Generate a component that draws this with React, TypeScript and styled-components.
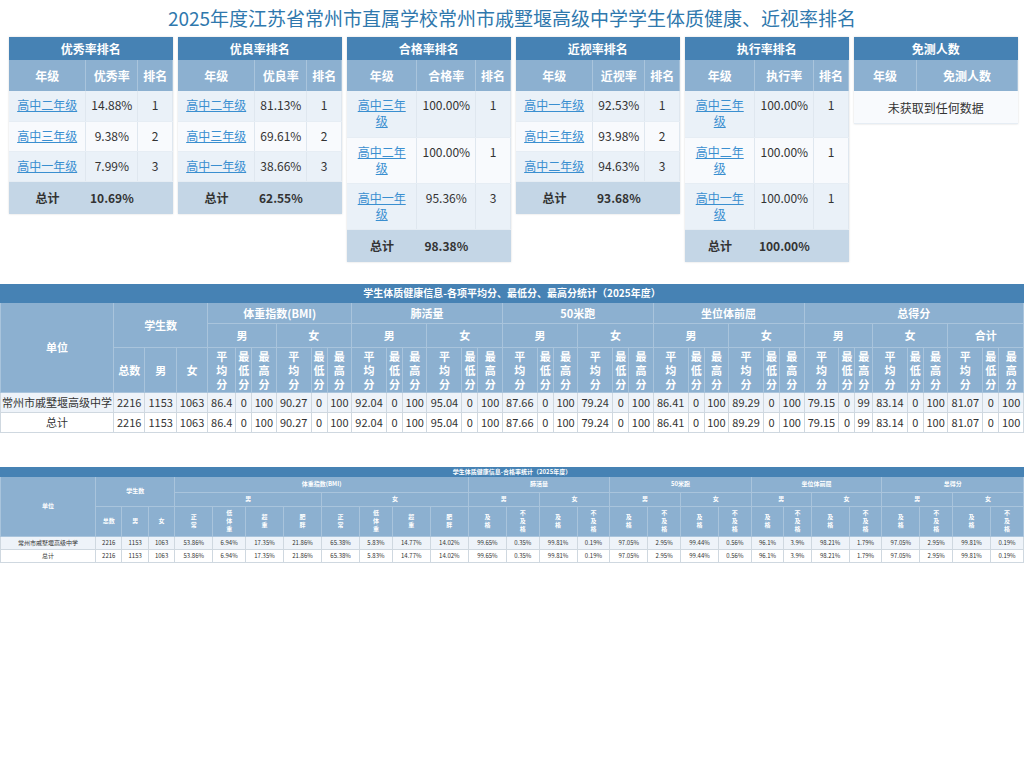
import React from 'react'
import styled, { createGlobalStyle } from 'styled-components'

const Global = createGlobalStyle`
  body {
    margin: 0;
    background: #fff;
    font-family: "Noto Sans CJK SC", "Noto Sans", sans-serif;
    color: #333;
  }
`

const Page = styled.div`
  width: 1024px;
`

const Title = styled.h1`
  margin: 0;
  padding-top: 4px;
  height: 33px;
  text-align: center;
  font-size: 19px;
  font-weight: 400;
  color: #2f78ad;
  line-height: 27px;
`

const Cards = styled.div`
  display: flex;
  align-items: flex-start;
  gap: 5px;
  padding: 0 6px 0 9px;
`

const Card = styled.table`
  width: 164px;
  border-collapse: collapse;
  font-size: 12px;
  text-align: center;
  box-shadow: 0 0 2px rgba(0, 0, 0, 0.15);
`

const CardTitle = styled.th`
  background: #4682b4;
  color: #fff;
  height: 23px;
  font-size: 12px;
  font-weight: 700;
  padding: 0;
`

const CardHead = styled.th`
  background: #8cb0d0;
  color: #fff;
  height: 31px;
  font-weight: 700;
  padding: 0 4px;
  border-right: 1px solid #a9c4dc;
`

const Row = styled.tr<{ $alt?: boolean }>`
  background: ${(p) => (p.$alt ? '#f8fafd' : '#eaf1f8')};
`

const Cell = styled.td`
  height: 30px;
  padding: 6px 5px 4px;
  vertical-align: top;
  line-height: 16px;
  border-right: 1px solid #dfe7ef;
  border-bottom: 1px solid #e6edf4;
  box-sizing: border-box;
`

const GradeLink = styled.a`
  color: #3a8fd0;
  text-decoration: underline;
  cursor: pointer;
`

const TotalRow = styled.tr`
  background: #c4d6e6;
  font-weight: 700;
  td {
    height: 30px;
    vertical-align: middle;
  }
`

const Empty = styled.td`
  height: 30px;
  background: #f8fafd;
  font-size: 12px;
  border-bottom: 1px solid #e6edf4;
`

const BigTable = styled.table<{ $small?: boolean }>`
  width: 100%;
  border-collapse: collapse;
  text-align: center;
  font-size: ${(p) => (p.$small ? '6px' : '11px')};
  margin-top: ${(p) => (p.$small ? '34px' : '22px')};
  th {
    color: #fff;
    font-weight: 700;
    background: #8cb0d0;
    border: 1px solid #a9c4dc;
    padding: 0 1px;
    line-height: ${(p) => (p.$small ? '8px' : '14px')};
  }
  td {
    border: 1px solid #cfd8e0;
    padding: 0 1px;
    white-space: nowrap;
    height: ${(p) => (p.$small ? '12px' : '19px')};
  }
`

const BarTitle = styled.th<{ $small?: boolean }>`
  && {
    background: #4682b4;
    height: ${(p) => (p.$small ? '7px' : '17px')};
    border-color: #4682b4;
    font-size: ${(p) => (p.$small ? '6px' : '10px')};
  }
`

const HeadRow = styled.tr<{ $h: number }>`
  th {
    height: ${(p) => p.$h}px;
  }
`

const DataRow = styled.tr<{ $alt?: boolean }>`
  background: ${(p) => (p.$alt ? '#ffffff' : '#eef3f9')};
`

type Item = { g: string; v: string; r: string }

const ranks: { title: string; col: string; items: Item[]; total: string }[] = [
  {
    title: '优秀率排名',
    col: '优秀率',
    items: [
      { g: '高中二年级', v: '14.88%', r: '1' },
      { g: '高中三年级', v: '9.38%', r: '2' },
      { g: '高中一年级', v: '7.99%', r: '3' },
    ],
    total: '10.69%',
  },
  {
    title: '优良率排名',
    col: '优良率',
    items: [
      { g: '高中二年级', v: '81.13%', r: '1' },
      { g: '高中三年级', v: '69.61%', r: '2' },
      { g: '高中一年级', v: '38.66%', r: '3' },
    ],
    total: '62.55%',
  },
  {
    title: '合格率排名',
    col: '合格率',
    items: [
      { g: '高中三年级', v: '100.00%', r: '1' },
      { g: '高中二年级', v: '100.00%', r: '1' },
      { g: '高中一年级', v: '95.36%', r: '3' },
    ],
    total: '98.38%',
  },
  {
    title: '近视率排名',
    col: '近视率',
    items: [
      { g: '高中一年级', v: '92.53%', r: '1' },
      { g: '高中三年级', v: '93.98%', r: '2' },
      { g: '高中二年级', v: '94.63%', r: '3' },
    ],
    total: '93.68%',
  },
  {
    title: '执行率排名',
    col: '执行率',
    items: [
      { g: '高中三年级', v: '100.00%', r: '1' },
      { g: '高中二年级', v: '100.00%', r: '1' },
      { g: '高中一年级', v: '100.00%', r: '1' },
    ],
    total: '100.00%',
  },
]

const stack = (s: string) =>
  s.split('').map((c, i) => (
    <React.Fragment key={i}>
      {i > 0 && <br />}
      {c}
    </React.Fragment>
  ))

const RankCard = ({ d }: { d: (typeof ranks)[number] }) => {
  const narrow = d.items.some((i) => i.v === '100.00%')
  return (
    <Card>
      <thead>
        <tr>
          <CardTitle colSpan={3}>{d.title}</CardTitle>
        </tr>
        <tr>
          <CardHead style={{ width: narrow ? 62 : 70 }}>年级</CardHead>
          <CardHead>{d.col}</CardHead>
          <CardHead style={{ width: 26 }}>排名</CardHead>
        </tr>
      </thead>
      <tbody>
        {d.items.map((it, i) => (
          <Row key={i} $alt={i % 2 === 1}>
            <Cell style={narrow ? { height: 46, padding: '6px 8px 4px' } : undefined}>
              <GradeLink>{it.g}</GradeLink>
            </Cell>
            <Cell>{it.v}</Cell>
            <Cell>{it.r}</Cell>
          </Row>
        ))}
        <TotalRow>
          <td>总计</td>
          <td>{d.total}</td>
          <td></td>
        </TotalRow>
      </tbody>
    </Card>
  )
}

const avgCols = ['平均分', '最低分', '最高分']
const scoreRow = [
  '2216', '1153', '1063',
  '86.4', '0', '100', '90.27', '0', '100',
  '92.04', '0', '100', '95.04', '0', '100',
  '87.66', '0', '100', '79.24', '0', '100',
  '86.41', '0', '100', '89.29', '0', '100',
  '79.15', '0', '99', '83.14', '0', '100', '81.07', '0', '100',
]

const ScoreTable = () => {
  const items = ['体重指数(BMI)', '肺活量', '50米跑', '坐位体前屈']
  const subs = [...items.flatMap(() => ['男', '女']), '男', '女', '合计']
  return (
    <BigTable>
      <thead>
        <tr>
          <BarTitle colSpan={37}>学生体质健康信息-各项平均分、最低分、最高分统计（2025年度）</BarTitle>
        </tr>
        <HeadRow $h={20}>
          <th rowSpan={3} style={{ width: 100 }}>单位</th>
          <th rowSpan={2} colSpan={3}>学生数</th>
          {items.map((t) => (
            <th key={t} colSpan={6}>{t}</th>
          ))}
          <th colSpan={9}>总得分</th>
        </HeadRow>
        <HeadRow $h={23}>
          {subs.map((s, i) => (
            <th key={i} colSpan={3}>{s}</th>
          ))}
        </HeadRow>
        <HeadRow $h={44}>
          <th>总数</th>
          <th>男</th>
          <th>女</th>
          {subs.flatMap((_, i) => avgCols.map((c) => <th key={i + c}>{stack(c)}</th>))}
        </HeadRow>
      </thead>
      <tbody>
        {['常州市戚墅堰高级中学', '总计'].map((u, i) => (
          <DataRow key={u} $alt={i === 1}>
            <td>{u}</td>
            {scoreRow.map((v, j) => (
              <td key={j}>{v}</td>
            ))}
          </DataRow>
        ))}
      </tbody>
    </BigTable>
  )
}

const passRow = [
  '2216', '1153', '1063',
  '53.86%', '6.94%', '17.35%', '21.86%', '65.38%', '5.83%', '14.77%', '14.02%',
  '99.65%', '0.35%', '99.81%', '0.19%',
  '97.05%', '2.95%', '99.44%', '0.56%',
  '96.1%', '3.9%', '98.21%', '1.79%',
  '97.05%', '2.95%', '99.81%', '0.19%',
]

const PassTable = () => {
  const bmi = ['正常', '低体重', '超重', '肥胖']
  const rest = ['肺活量', '50米跑', '坐位体前屈', '总得分']
  return (
    <BigTable $small>
      <thead>
        <tr>
          <BarTitle $small colSpan={28}>学生体质健康信息-合格率统计（2025年度）</BarTitle>
        </tr>
        <HeadRow $h={15}>
          <th rowSpan={3} style={{ width: 92 }}>单位</th>
          <th rowSpan={2} colSpan={3}>学生数</th>
          <th colSpan={8}>体重指数(BMI)</th>
          {rest.map((t) => (
            <th key={t} colSpan={4}>{t}</th>
          ))}
        </HeadRow>
        <HeadRow $h={13}>
          <th colSpan={4}>男</th>
          <th colSpan={4}>女</th>
          {rest.flatMap((t) => [
            <th key={t + 'm'} colSpan={2}>男</th>,
            <th key={t + 'f'} colSpan={2}>女</th>,
          ])}
        </HeadRow>
        <HeadRow $h={29}>
          <th>总数</th>
          <th>男</th>
          <th>女</th>
          {[0, 1].flatMap((k) => bmi.map((b) => <th key={k + b}>{stack(b)}</th>))}
          {Array.from({ length: 8 }).flatMap((_, k) => [
            <th key={k + 'a'}>{stack('及格')}</th>,
            <th key={k + 'b'}>{stack('不及格')}</th>,
          ])}
        </HeadRow>
      </thead>
      <tbody>
        {['常州市戚墅堰高级中学', '总计'].map((u, i) => (
          <DataRow key={u} $alt={i === 1}>
            <td>{u}</td>
            {passRow.map((v, j) => (
              <td key={j}>{v}</td>
            ))}
          </DataRow>
        ))}
      </tbody>
    </BigTable>
  )
}

export default function App() {
  return (
    <Page>
      <Global />
      <Title>2025年度江苏省常州市直属学校常州市戚墅堰高级中学学生体质健康、近视率排名</Title>
      <Cards>
        {ranks.map((d) => (
          <RankCard key={d.title} d={d} />
        ))}
        <Card>
          <thead>
            <tr>
              <CardTitle colSpan={2}>免测人数</CardTitle>
            </tr>
            <tr>
              <CardHead style={{ width: 54 }}>年级</CardHead>
              <CardHead>免测人数</CardHead>
            </tr>
          </thead>
          <tbody>
            <tr>
              <Empty colSpan={2}>未获取到任何数据</Empty>
            </tr>
          </tbody>
        </Card>
      </Cards>
      <ScoreTable />
      <PassTable />
    </Page>
  )
}
